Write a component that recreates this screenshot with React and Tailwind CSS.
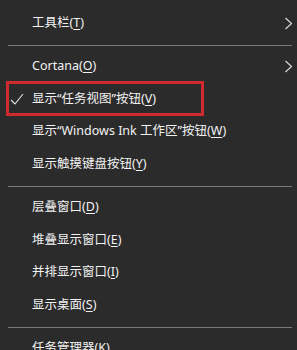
import React from 'react';

const font = { fontFamily: '"Noto Sans", "Noto Sans CJK SC", sans-serif' };

function Key({ k }) {
  return (
    <>
      (<span className="underline underline-offset-2">{k}</span>)
    </>
  );
}

function Item({ label, k, arrow, checked }) {
  return (
    <div className="relative flex h-[32.5px] items-center pl-8 pr-[4px]">
      {checked && (
        <svg className="absolute left-[10px] top-1/2 -translate-y-1/2" width="14" height="12" viewBox="0 0 14 12">
          <path d="M1 7 L5 11 L13 1" fill="none" stroke="#e6e6e6" strokeWidth="1.1" />
        </svg>
      )}
      <span className="whitespace-nowrap text-[12.5px] text-[#f2f2f2]">
        {label}
        <Key k={k} />
      </span>
      {arrow && (
        <svg className="ml-auto" width="9" height="13" viewBox="0 0 9 13">
          <path d="M1.5 1 L7.5 6.5 L1.5 12" fill="none" stroke="#d8d8d8" strokeWidth="1.2" />
        </svg>
      )}
    </div>
  );
}

function Sep() {
  return <div className="ml-2 mr-[5px] my-[5px] h-px bg-[#7a7a7a]" />;
}

export default function App() {
  return (
    <div className="relative h-[350px] w-[297px] overflow-hidden bg-[#2b2b2b] pt-[7px]" style={font}>
      <Item label="工具栏" k="T" arrow />
      <Sep />
      <Item label="Cortana" k="O" arrow />
      <Item label="显示“任务视图”按钮" k="V" checked />
      <Item label="显示“Windows Ink 工作区”按钮" k="W" />
      <Item label="显示触摸键盘按钮" k="Y" />
      <Sep />
      <Item label="层叠窗口" k="D" />
      <Item label="堆叠显示窗口" k="E" />
      <Item label="并排显示窗口" k="I" />
      <Item label="显示桌面" k="S" />
      <Sep />
      <Item label="任务管理器" k="K" />

      {/* red annotation box */}
      <div className="pointer-events-none absolute left-[6px] top-[81px] h-[35px] w-[198px] border-[3px] border-[#cf2a2e]" />
    </div>
  );
}
